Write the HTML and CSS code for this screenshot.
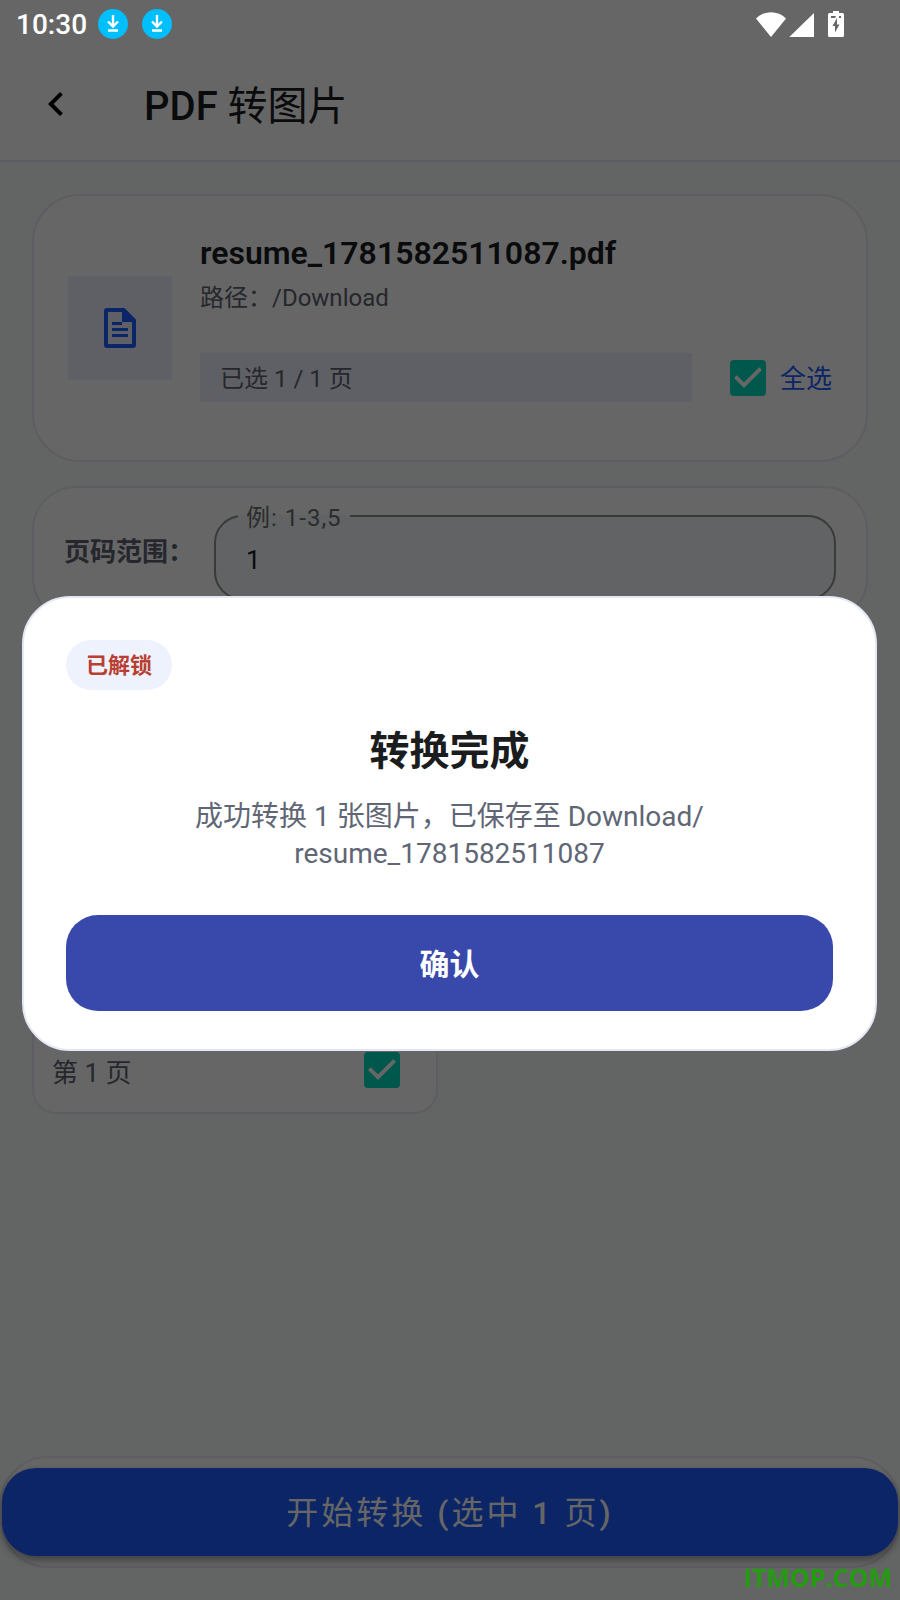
FILE: index.html
```html
<!DOCTYPE html>
<html lang="zh-CN">
<head>
  <meta charset="UTF-8">
  <meta name="viewport" content="width=device-width, initial-scale=1">
  <title>PDF 转图片</title>
  <link rel="stylesheet" href="styles.css">
</head>
<body>
  <div class="status-bar">
    <span class="time">10:30</span>
    <svg class="download" viewBox="0 0 30 30" aria-hidden="true">
      <circle cx="15" cy="15" r="15" fill="#00bfff"/>
      <path d="M15 6v11M10 12.500l5 5 5-5M10 21.500h10" fill="none" stroke="#fff" stroke-width="2.400"/>
    </svg>
    <svg class="download" viewBox="0 0 30 30" aria-hidden="true">
      <circle cx="15" cy="15" r="15" fill="#00bfff"/>
      <path d="M15 6v11M10 12.500l5 5 5-5M10 21.500h10" fill="none" stroke="#fff" stroke-width="2.400"/>
    </svg>
    <svg class="system" viewBox="0 0 88 26" aria-hidden="true">
      <path d="M15 26L0 7.500C8-.900 22-.900 30 7.500z"/>
      <path d="M33 26.300L58 2v24.300z"/>
      <path fill-rule="evenodd" d="M77 0h6v2h3.500q1.500 0 1.500 1.500v21q0 1.500-1.500 1.500h-13q-1.500 0-1.500-1.500v-21q0-1.500 1.500-1.500H77zM75 5v2h4l1-2zM83 5v2h2V5zM81 7l-4.500 8H79v6.500l4.500-8H81z"/>
    </svg>
  </div>

  <header class="app-bar">
    <button class="back" type="button" aria-label="返回">
      <svg viewBox="0 0 24 24" aria-hidden="true"><path d="M15.410 7.410L14 6l-6 6 6 6 1.410-1.410L10.830 12z"/></svg>
    </button>
    <h1><span class="latin">PDF</span> 转图片</h1>
  </header>

  <main class="content">
    <section class="card file-card">
      <div class="file-icon">
        <svg viewBox="0 0 24 24" aria-hidden="true">
          <path fill-rule="evenodd" d="M5.500 2h8.700L20 7.800v12.700q0 1.500-1.500 1.500h-13Q4 22 4 20.500v-17Q4 2 5.500 2zM6 4v16h12V9h-5V4z"/>
          <path d="M8 9h5v1.500H8zM8 12h8v1.500H8zM8 15h8v1.500H8z"/>
        </svg>
      </div>
      <div class="file-info">
        <h2>resume_1781582511087.pdf</h2>
        <p class="path">路径：/Download</p>
        <div class="selection">
          <span class="count">已选 1 / 1 页</span>
          <input class="check" id="select-all" type="checkbox" checked>
          <label class="select-all" for="select-all">全选</label>
        </div>
      </div>
    </section>

    <section class="card range-card">
      <span class="range-title">页码范围：</span>
      <fieldset class="range-field">
        <legend><label for="range">例: 1-3,5</label></legend>
        <input id="range" type="text" value="1">
      </fieldset>
    </section>

    <div class="pages">
      <section class="card page-card">
        <div class="preview"></div>
        <div class="page-row">
          <label for="page-1">第 1 页</label>
          <input class="check" id="page-1" type="checkbox" checked>
        </div>
      </section>
    </div>
  </main>

  <footer class="bottom-bar">
    <button class="start" type="button">开始转换 <span class="latin">(</span>选中 <span class="latin">1</span> 页<span class="latin">)</span></button>
  </footer>

  <div class="overlay">
    <div class="dialog" role="dialog" aria-modal="true" aria-labelledby="dialog-title">
      <span class="badge">已解锁</span>
      <h2 id="dialog-title">转换完成</h2>
      <p>成功转换 1 张图片，已保存至 Download/<br>resume_1781582511087</p>
      <button class="confirm" type="button">确认</button>
    </div>
  </div>

  <div class="watermark">ITMOP.COM</div>
</body>
</html>
```

FILE: styles.css
```css
* {
  box-sizing: border-box;
}

body {
  display: flex;
  flex-direction: column;
  min-height: 100vh;
  margin: 0;
  background-color: #f8fcfa;
  color: #1a1c1e;
  font-family: Roboto, "Noto Sans CJK SC", sans-serif;
}

h1, h2, p {
  margin: 0;
}

button, input {
  font-family: inherit;
}

button {
  border: none;
  padding: 0;
  cursor: pointer;
}

svg {
  display: block;
}

.latin {
  font-weight: 500;
}

/* Status bar stays above the dimmed page */
.status-bar {
  position: relative;
  z-index: 2;
  display: flex;
  align-items: center;
  gap: 14px;
  height: 48px;
  padding: 0 56px 0 16px;
  background-color: #666;
  color: #fff;
}

.time {
  width: 68px;
  padding-top: 2px;
  font-size: 28px;
  font-weight: 500;
  line-height: 32px;
}

.download {
  width: 30px;
  height: 30px;
}

.system {
  width: 88px;
  height: 26px;
  margin-left: auto;
  fill: #fff;
}

.app-bar {
  display: flex;
  align-items: center;
  gap: 64px;
  height: 114px;
  padding: 0 32px;
  border-bottom: 2px solid #e4e8f5;
  background-color: #fff;
}

.back {
  width: 48px;
  height: 48px;
  background: none;
}

.app-bar h1 {
  padding-top: 6px;
  font-size: 40px;
  font-weight: 400;
  line-height: 48px;
}

.content {
  flex: 1;
  display: flex;
  flex-direction: column;
  gap: 24px;
  padding: 32px;
}

.card {
  border: 2px solid #e8e8f4;
  background-color: #fff;
}

.file-card {
  display: flex;
  align-items: center;
  gap: 28px;
  padding: 36px 34px;
  border-radius: 48px;
}

.file-icon {
  display: grid;
  place-items: center;
  width: 104px;
  height: 104px;
  background-color: #eef1fc;
}

.file-icon svg {
  width: 48px;
  height: 48px;
  fill: #1e5eff;
}

.file-info {
  flex: 1;
  padding-bottom: 22px;
}

.file-info h2 {
  font-size: 32px;
  font-weight: 600;
  line-height: 42px;
}

.path {
  color: #5c6370;
  font-size: 24px;
  line-height: 48px;
}

.selection {
  display: flex;
  align-items: center;
  margin-top: 31px;
}

.count {
  flex: 1;
  margin-right: 38px;
  padding: 3px 20px 0;
  background-color: #eef1fc;
  color: #5c6370;
  font-size: 24px;
  line-height: 46px;
}

.select-all {
  padding: 3px 0 0 14px;
  color: #1e5eff;
  font-size: 26px;
  line-height: 46px;
}

.check {
  appearance: none;
  width: 36px;
  height: 36px;
  margin: 0;
  border-radius: 4px;
  background: #00dabd url("data:image/svg+xml,%3Csvg xmlns='http://www.w3.org/2000/svg' viewBox='3 3 18 18'%3E%3Cpath fill='%23fff' d='M10 17l-5-5 1.410-1.410L10 14.170l7.590-7.590L19 8z'/%3E%3C/svg%3E");
}

.range-card {
  display: flex;
  align-items: center;
  gap: 20px;
  height: 136px;
  padding: 0 30px;
  border-radius: 44px;
}

.range-title {
  margin-bottom: 4px;
  color: #5c6370;
  font-size: 26px;
  font-weight: 700;
  line-height: 40px;
}

.range-field {
  flex: 1;
  min-width: 0;
  height: 100px;
  margin: 0 0 8px;
  padding: 0 30px;
  border: 2px solid #8f9491;
  border-radius: 28px;
  background-color: #f5f7fc;
}

.range-field legend {
  margin-left: -8px;
  padding: 4px 8px 0;
  color: #6b6f6d;
  font-size: 24px;
  letter-spacing: 1px;
  line-height: 28px;
}

.range-field input {
  display: block;
  width: 100%;
  height: 56px;
  padding: 0;
  border: none;
  outline: none;
  background: none;
  color: #1a1c1e;
  font-size: 26px;
}

.pages {
  display: grid;
  grid-template-columns: 1fr 1fr;
  gap: 24px;
}

.page-card {
  padding: 18px 18px 12px;
  border-radius: 24px;
}

.preview {
  height: 374px;
}

.page-row {
  display: flex;
  align-items: center;
  justify-content: space-between;
  height: 60px;
  padding-right: 18px;
  color: #5c6370;
  font-size: 26px;
}

.bottom-bar {
  margin-bottom: 32px;
  padding: 10px 0;
  border: 2px solid #e8e8f4;
  border-radius: 48px;
  background-color: #fff;
}

.start {
  display: block;
  width: 100%;
  height: 88px;
  padding-bottom: 4px;
  border-radius: 34px;
  background-color: #1e5eff;
  box-shadow: 0 4px 8px rgba(0, 0, 0, 0.4);
  color: #fff;
  font-size: 32px;
  font-weight: 400;
  letter-spacing: 3px;
}

.overlay {
  position: fixed;
  z-index: 1;
  inset: 0;
  display: flex;
  align-items: center;
  padding: 46px 23px 0 22px;
  background-color: rgba(0, 0, 0, 0.6);
}

.dialog {
  flex: 1;
  display: flex;
  flex-direction: column;
  padding: 42px 42px 38px;
  border: 2px solid #e4e8f5;
  border-radius: 48px;
  background-color: #fff;
  text-align: center;
}

.badge {
  align-self: flex-start;
  padding: 2px 20px 0;
  border-radius: 25px;
  background-color: #edf2fc;
  color: #b93f32;
  font-size: 22px;
  font-weight: 700;
  line-height: 48px;
}

.dialog h2 {
  margin: 38px 0 22px;
  font-size: 40px;
  font-weight: 700;
  line-height: 48px;
}

.dialog p {
  margin-bottom: 43px;
  color: #5f6675;
  font-size: 28px;
  line-height: 37px;
}

.confirm {
  height: 96px;
  padding-bottom: 2px;
  border-radius: 32px;
  background-color: #3949ab;
  color: #fff;
  font-size: 30px;
  font-weight: 700;
}

.watermark {
  position: fixed;
  z-index: 2;
  right: 8px;
  bottom: 7px;
  color: #239c10;
  font-family: "Open Sans", sans-serif;
  font-size: 25px;
  font-weight: 700;
  line-height: 32px;
}
```
